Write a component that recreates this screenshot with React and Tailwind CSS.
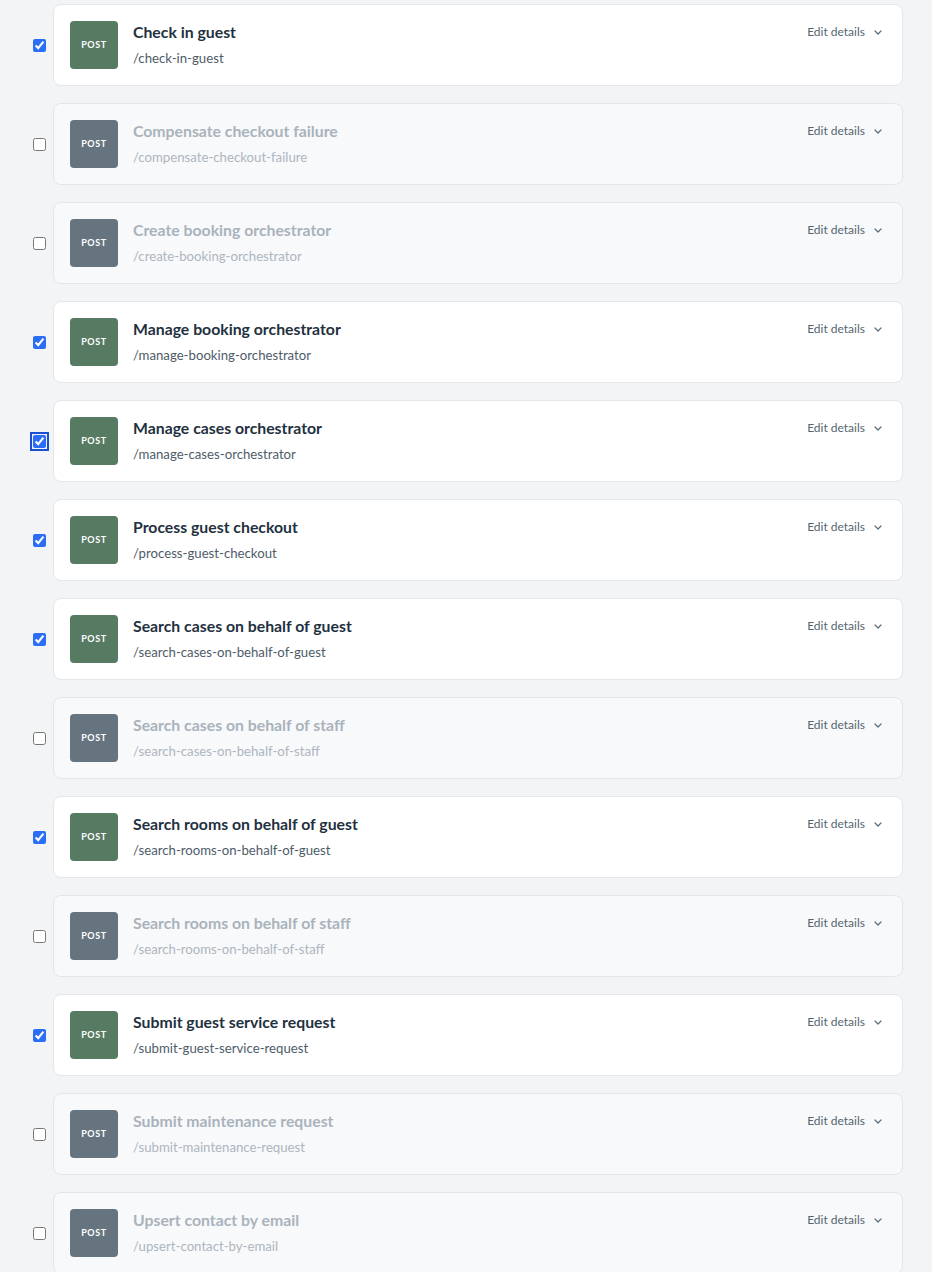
import React from "react";

const endpoints = [
  { name: "Check in guest", path: "/check-in-guest", on: true },
  { name: "Compensate checkout failure", path: "/compensate-checkout-failure", on: false },
  { name: "Create booking orchestrator", path: "/create-booking-orchestrator", on: false },
  { name: "Manage booking orchestrator", path: "/manage-booking-orchestrator", on: true },
  { name: "Manage cases orchestrator", path: "/manage-cases-orchestrator", on: true, focus: true },
  { name: "Process guest checkout", path: "/process-guest-checkout", on: true },
  { name: "Search cases on behalf of guest", path: "/search-cases-on-behalf-of-guest", on: true },
  { name: "Search cases on behalf of staff", path: "/search-cases-on-behalf-of-staff", on: false },
  { name: "Search rooms on behalf of guest", path: "/search-rooms-on-behalf-of-guest", on: true },
  { name: "Search rooms on behalf of staff", path: "/search-rooms-on-behalf-of-staff", on: false },
  { name: "Submit guest service request", path: "/submit-guest-service-request", on: true },
  { name: "Submit maintenance request", path: "/submit-maintenance-request", on: false },
  { name: "Upsert contact by email", path: "/upsert-contact-by-email", on: false },
];

function Chevron() {
  return (
    <svg width="8" height="5" viewBox="0 0 8 5" fill="none" className="mt-[1px]">
      <path d="M1 1l3 3 3-3" stroke="#5b6b78" strokeWidth="1.2" strokeLinecap="round" strokeLinejoin="round" />
    </svg>
  );
}

function EndpointRow({ item }) {
  return (
    <div className="flex items-center">
      <div className="w-[53px] shrink-0 flex justify-start pl-[33px]">
        <input
          type="checkbox"
          defaultChecked={item.on}
          className={
            "w-[13px] h-[13px] m-0 accent-[#2b6ef5] " +
            (item.focus ? "outline-2 outline-offset-1 outline-[#1c4fd0] rounded-[2px]" : "")
          }
        />
      </div>
      <div
        className={
          "flex-1 flex items-start gap-[15px] p-4 rounded-lg border border-[#e3e6ea] " +
          (item.on ? "bg-white" : "bg-[#f8f9fb]")
        }
      >
        <div
          className={
            "w-12 h-12 shrink-0 rounded-[4px] flex items-center justify-center text-white text-[9px] font-bold tracking-[0.6px] " +
            (item.on ? "bg-[#577a63]" : "bg-[#65747f]")
          }
        >
          POST
        </div>
        <div className="flex-1 min-w-0 -mt-[1px]">
          <div
            className={
              "text-[15.8px] leading-6 font-bold " + (item.on ? "text-[#1f3140]" : "text-[#a9b3bb]")
            }
          >
            {item.name}
          </div>
          <div
            className={
              "text-[13.2px] leading-5 mt-[4px] " + (item.on ? "text-[#4e5c69]" : "text-[#adb6be]")
            }
          >
            {item.path}
          </div>
        </div>
        <div className="flex items-center gap-[9px] pr-[4px] pt-[1px] text-[12px] leading-5 text-[#55656f]">
          <span>Edit details</span>
          <Chevron />
        </div>
      </div>
    </div>
  );
}

export default function App() {
  return (
    <div
      className="min-h-[1272px] w-[932px] bg-[#f3f4f6] pt-[4px] pr-[29px] flex flex-col gap-[17px]"
      style={{ fontFamily: "Lato, 'Open Sans', sans-serif" }}
    >
      {endpoints.map((item) => (
        <EndpointRow key={item.path} item={item} />
      ))}
    </div>
  );
}
